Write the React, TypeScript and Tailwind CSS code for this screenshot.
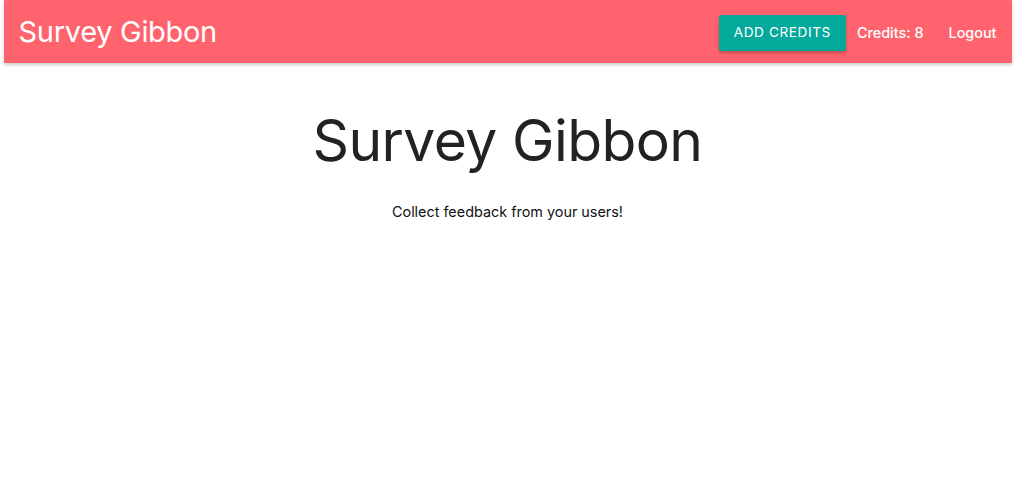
export default function App() {
  return (
    <div className="min-h-screen bg-white text-[14.4px] leading-normal text-[rgba(0,0,0,0.87)]" style={{ fontFamily: "Inter, 'Noto Sans', sans-serif" }}>
      <div className="mx-auto w-[1008px]">
        <nav className="flex h-[63px] items-center justify-between bg-[#ff636e] pl-[15px] pr-[4px] text-white shadow-[0_2px_3px_rgba(0,0,0,0.2)]">
          <a href="#" className="text-[29px] leading-none tracking-[-0.3px]">Survey Gibbon</a>
          <ul className="flex items-center pt-[2px] font-medium">
            <li className="mr-[11px]">
              <button className="h-[36px] rounded-[2px] bg-[#03a99b] px-[15px] text-[13.6px] font-normal tracking-[0.6px] uppercase shadow-[0_2px_3px_rgba(0,0,0,0.25)]">
                Add Credits
              </button>
            </li>
            <li className="pr-[11px]">Credits: 8</li>
            <li className="pl-[14px] pr-[11px]">
              <a href="#">Logout</a>
            </li>
          </ul>
        </nav>
        <div className="text-center">
          <h1 className="mt-[47px] mb-[28px] text-[57px] leading-[1.1] tracking-[-0.6px] text-[#222]">Survey Gibbon</h1>
          <p className="text-[#111]">Collect feedback from your users!</p>
        </div>
      </div>
    </div>
  );
}
